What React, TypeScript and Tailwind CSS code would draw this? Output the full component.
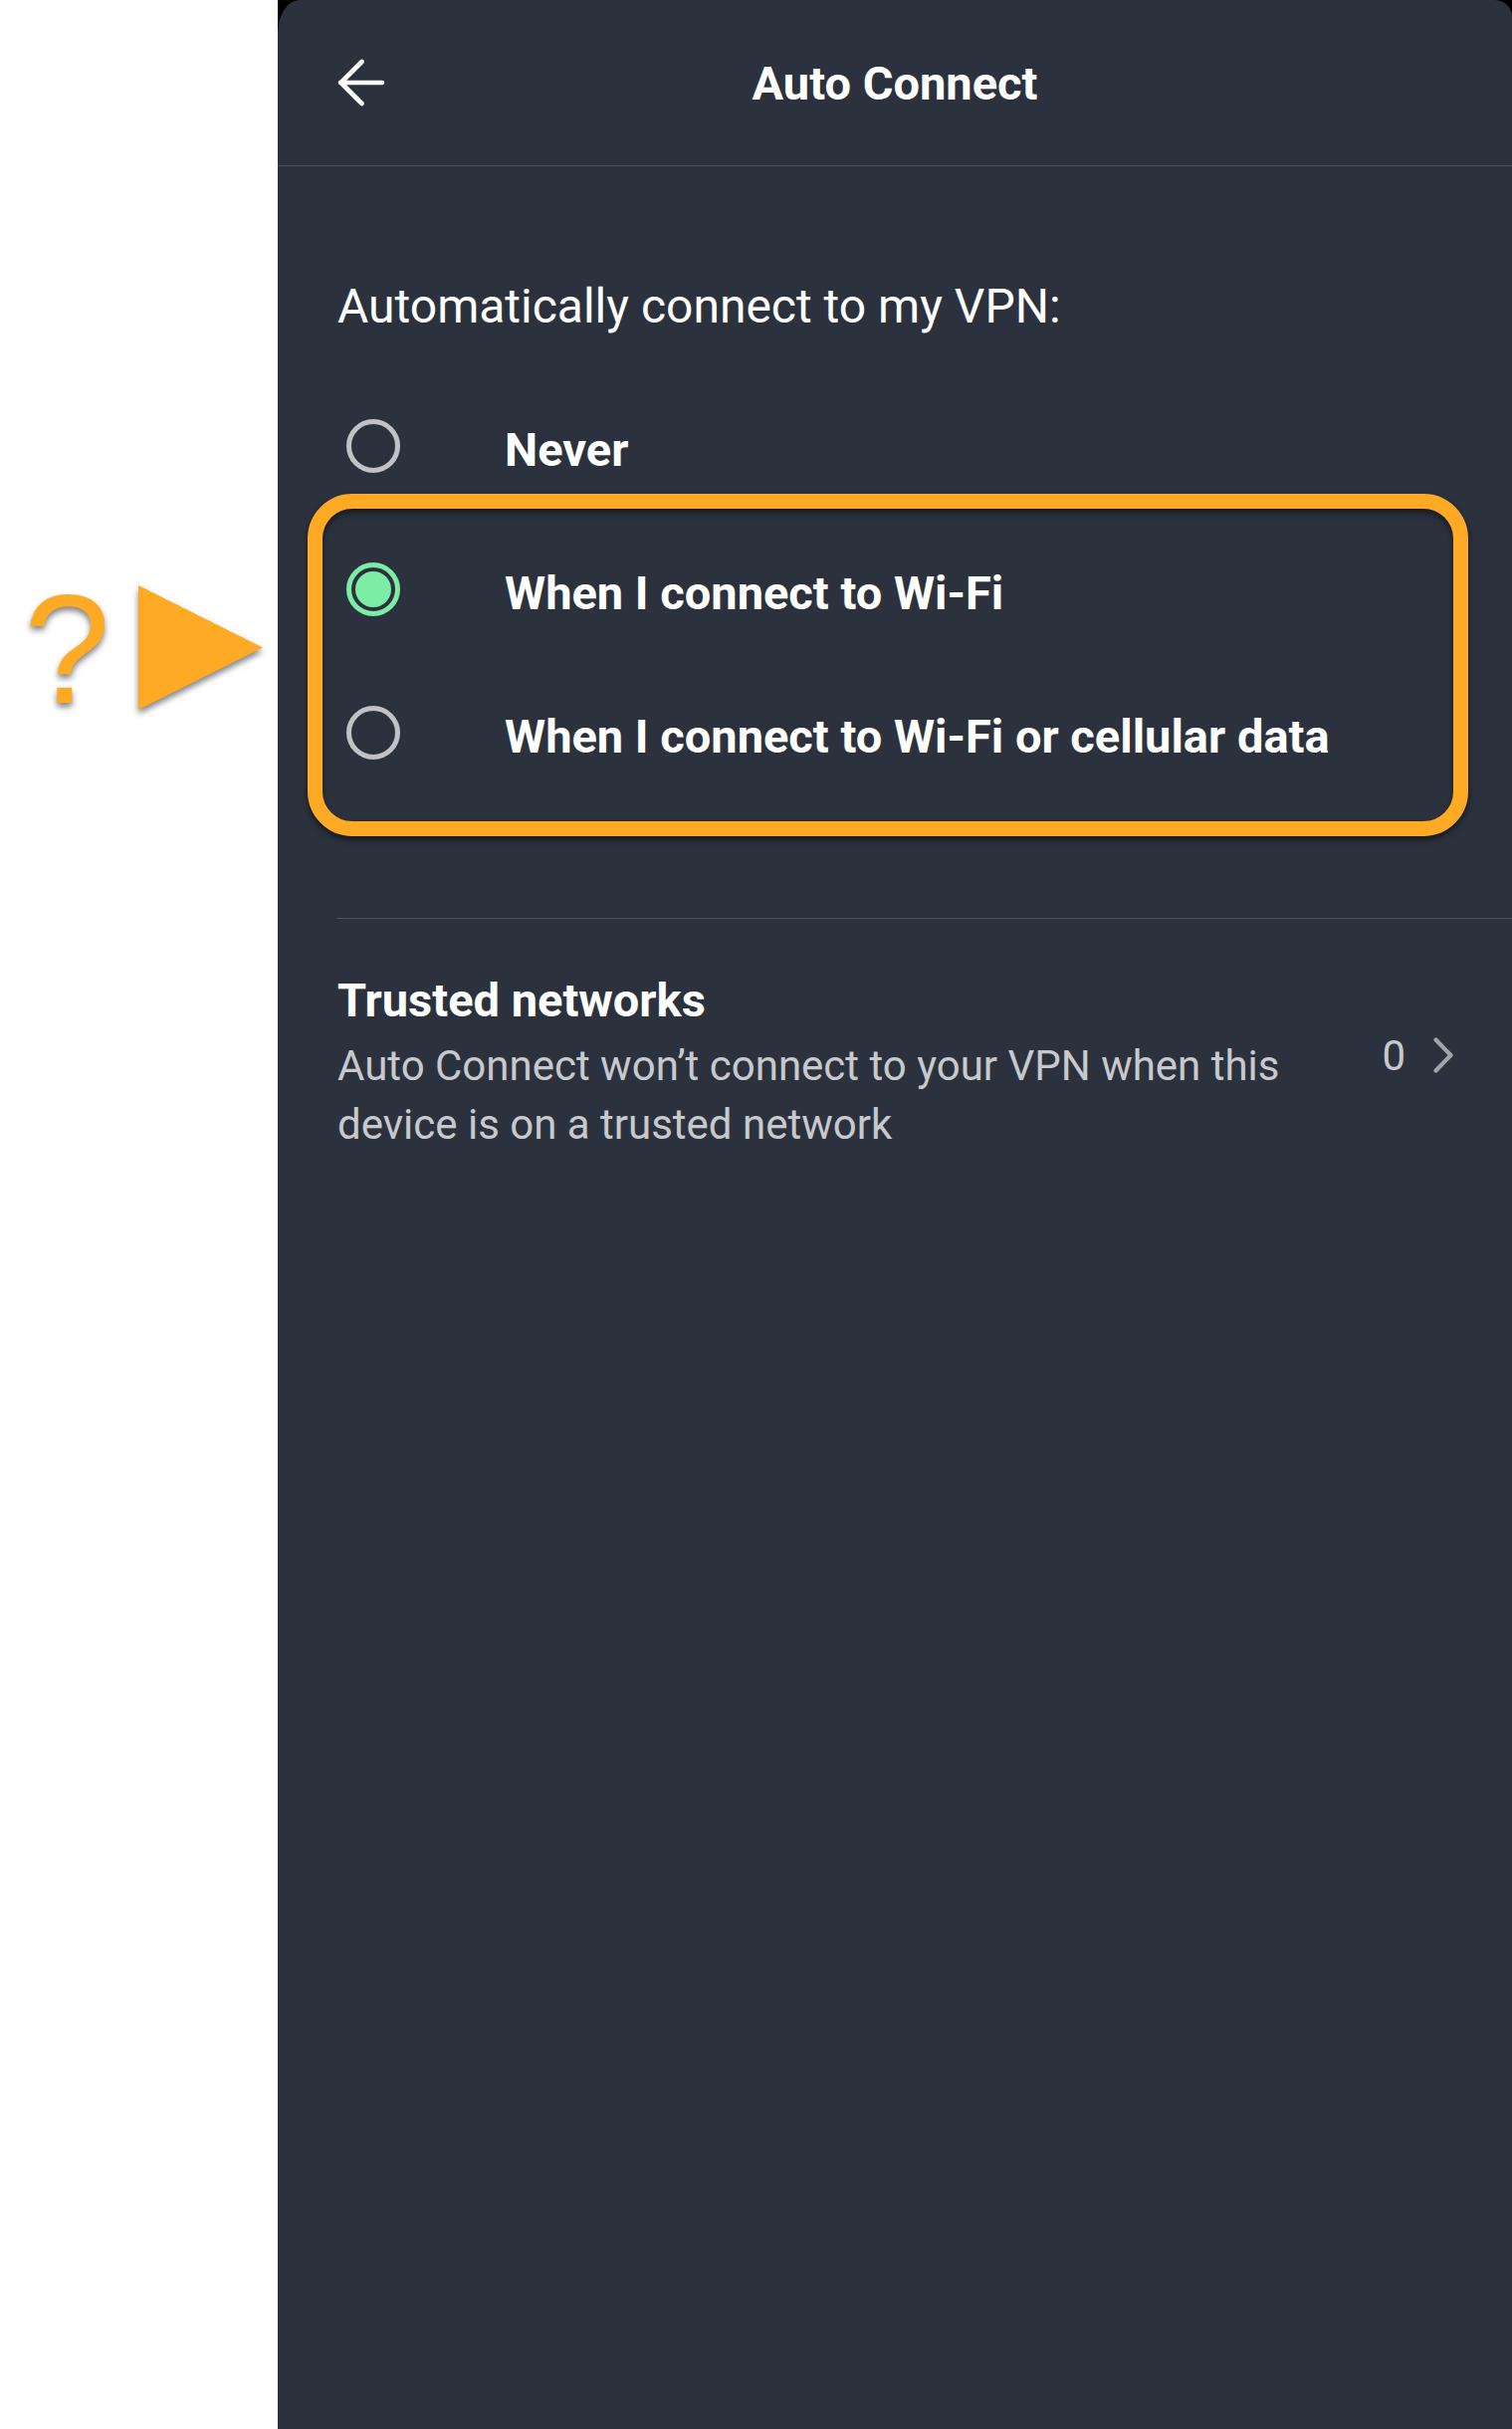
import React, { useState } from "react";

const options = [
  { value: "never", label: "Never" },
  { value: "wifi", label: "When I connect to Wi-Fi" },
  { value: "any", label: "When I connect to Wi-Fi or cellular data" },
];

type OptionProps = {
  value: string;
  label: string;
  checked: boolean;
  onSelect: (value: string) => void;
};

const Option = ({ value, label, checked, onSelect }: OptionProps) => {
  return (
    <label className="flex h-36 cursor-pointer items-center pl-[9px]">
      <input
        type="radio"
        name="auto-connect"
        value={value}
        checked={checked}
        onChange={() => onSelect(value)}
        className="size-[54px] shrink-0 appearance-none rounded-full border-5 border-[#c1c1c6] bg-clip-content p-1 checked:border-[#7deca4] checked:bg-[#7deca4]"
      />
      <span className="ml-[105px] pt-2 text-[47px] leading-14 font-bold">
        {label}
      </span>
    </label>
  );
};

const App = () => {
  const [selected, setSelected] = useState("wifi");
  const [never, ...automatic] = options;

  return (
    <div className="flex min-h-screen bg-white font-['Roboto',sans-serif]">
      {/* Callout pointing at the highlighted options */}
      <aside className="w-[279px] shrink-0 pt-[588px]">
        <div className="flex h-[125px] items-center pl-6 text-[#ffaa24] drop-shadow-[0_4px_3px_rgba(0,0,0,0.5)]">
          <span className="w-[115px] pt-0.5 font-['Liberation_Sans',sans-serif] text-[156px] leading-none">
            ?
          </span>
          <svg
            width="125"
            height="125"
            viewBox="0 0 125 125"
            fill="currentColor"
            aria-hidden="true"
          >
            <path d="M0 0 L125 62.5 L0 125 Z" />
          </svg>
        </div>
      </aside>

      <div className="flex flex-1 bg-black">
        <div className="flex-1 rounded-tl-[22px_34px] rounded-tr-[18px_16px] bg-[#2c323d] text-white">
          <header className="grid h-[167px] grid-cols-[1fr_auto_1fr] items-center border-b border-[#50525b] px-[60px]">
            <button type="button" aria-label="Back">
              <svg
                width="48"
                height="48"
                viewBox="0 0 48 48"
                fill="none"
                stroke="currentColor"
                strokeWidth="4.6"
                strokeLinecap="round"
                strokeLinejoin="round"
              >
                <path d="M45 24H3M24.500 3L3.500 24L24.500 45" />
              </svg>
            </button>
            <h1 className="pt-0.5 text-[47px] leading-14 font-bold">
              Auto Connect
            </h1>
          </header>

          <main>
            <fieldset className="px-[60px] pt-[113px] pb-[114px]">
              <legend className="contents">
                <span className="block text-5xl leading-14">
                  Automatically connect to my VPN:
                </span>
              </legend>
              <div className="mt-10">
                <Option
                  {...never}
                  checked={selected === never.value}
                  onSelect={setSelected}
                />
                <div className="relative">
                  {automatic.map((option) => (
                    <Option
                      key={option.value}
                      {...option}
                      checked={selected === option.value}
                      onSelect={setSelected}
                    />
                  ))}
                  <div className="pointer-events-none absolute -top-6 -right-4 -bottom-8 -left-[30px] rounded-[45px] border-[15px] border-[#ffaa24] drop-shadow-[0_4px_3px_rgba(0,0,0,0.5)]" />
                </div>
              </div>
            </fieldset>

            <section className="ml-[60px] border-t border-[#50525b] pt-[54px]">
              <a href="#trusted" className="flex items-center pr-[59px]">
                <div className="flex-1">
                  <h2 className="text-[47px] leading-14 font-bold">
                    Trusted networks
                  </h2>
                  <p className="mt-2 max-w-[980px] text-[42px] leading-[59px] text-[#c8c9cc]">
                    Auto Connect won’t connect to your VPN when this device is
                    on a trusted network
                  </p>
                </div>
                <div className="flex items-center gap-7 pb-4">
                  <span className="text-[42px] leading-[59px] text-[#c8c9cc]">
                    0
                  </span>
                  <svg
                    width="20"
                    height="36"
                    viewBox="0 0 20 36"
                    fill="none"
                    stroke="#a1a3a7"
                    strokeWidth="4.2"
                    strokeLinecap="round"
                    strokeLinejoin="round"
                    aria-hidden="true"
                  >
                    <path d="M2.500 2.500L17.500 18L2.500 33.500" />
                  </svg>
                </div>
              </a>
            </section>
          </main>
        </div>
      </div>
    </div>
  );
};

export default App;
